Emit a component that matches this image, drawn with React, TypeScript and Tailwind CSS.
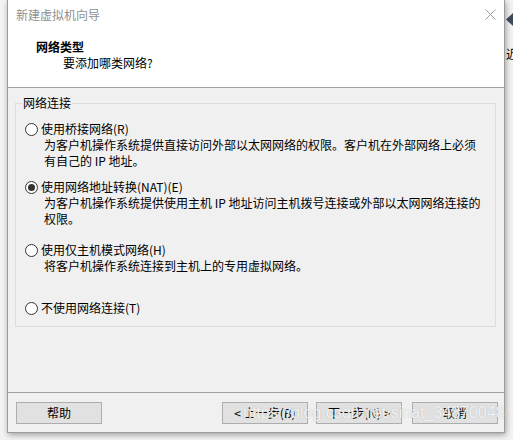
import React from "react";

function Radio({ checked }: { checked?: boolean }) {
  return (
    <span className="w-[13px] h-[13px] rounded-full border border-[#333333] bg-white flex items-center justify-center shrink-0">
      {checked ? <span className="w-[7px] h-[7px] rounded-full bg-[#333333]" /> : null}
    </span>
  );
}

function Option({
  label,
  desc,
  checked,
  className,
}: {
  label: string;
  desc: string[];
  checked?: boolean;
  className?: string;
}) {
  return (
    <div className={"pl-[9px] " + (className ?? "")}>
      <div className="flex items-center gap-[3px] h-[16px]">
        <Radio checked={checked} />
        <span className="leading-[16px]">{label}</span>
      </div>
      {desc.map((d, i) => (
        <div key={i} className="pl-[19px] leading-[16px] h-[16px] whitespace-nowrap">
          {d}
        </div>
      ))}
    </div>
  );
}

function Btn({ children, className }: { children: React.ReactNode; className?: string }) {
  return (
    <div
      className={
        "h-[22px] w-[86px] bg-[#e1e1e1] border border-[#adadad] flex items-center justify-center leading-[16px] " +
        (className ?? "")
      }
    >
      {children}
    </div>
  );
}

export default function App() {
  return (
    <div className="w-[513px] h-[440px] bg-[#f3f3f3] flex overflow-hidden relative text-[12px] text-black font-['Noto_Sans_CJK_SC','Noto_Sans',sans-serif]">
      <div className="w-[7px] shrink-0" />
      <div className="w-[498px] h-[433px] shrink-0 flex flex-col border-x border-b border-[#9c9c9c] bg-white shadow-[1px_2px_6px_rgba(0,0,0,0.35)] z-10">
        {/* title bar */}
        <div className="h-[30px] flex items-center justify-between pl-[8px] pr-[8px]">
          <span className="text-[#8f8f8f] leading-[16px]">新建虚拟机向导</span>
          <svg width="11" height="11" viewBox="0 0 11 11" className="mb-[1px]">
            <path d="M0.5 0.5 L10.5 10.5 M10.5 0.5 L0.5 10.5" stroke="#9a9a9a" strokeWidth="1" fill="none" />
          </svg>
        </div>
        {/* header */}
        <div className="h-[57px] pl-[28px] pt-[9px]">
          <div className="font-bold leading-[16px]">网络类型</div>
          <div className="pl-[27px] leading-[16px]">要添加哪类网络?</div>
        </div>
        {/* body */}
        <div className="h-[305px] bg-[#f0f0f0] border-t border-[#a0a0a0]">
          <fieldset className="mt-[7px] ml-[7px] w-[481px] border border-[#dcdcdc] pb-[10px]">
            <legend className="ml-[6px] px-[1px] leading-[16px]">网络连接</legend>
            <Option
              className="mt-[10px]"
              label="使用桥接网络(R)"
              desc={[
                "为客户机操作系统提供直接访问外部以太网网络的权限。客户机在外部网络上必须",
                "有自己的 IP 地址。",
              ]}
            />
            <Option
              className="mt-[10px]"
              checked
              label="使用网络地址转换(NAT)(E)"
              desc={[
                "为客户机操作系统提供使用主机 IP 地址访问主机拨号连接或外部以太网网络连接的",
                "权限。",
              ]}
            />
            <Option
              className="mt-[15px]"
              label="使用仅主机模式网络(H)"
              desc={["将客户机操作系统连接到主机上的专用虚拟网络。"]}
            />
            <Option className="mt-[26px]" label="不使用网络连接(T)" desc={[]} />
          </fieldset>
        </div>
        {/* footer */}
        <div className="flex-1 bg-[#f0f0f0] border-t border-[#a0a0a0] flex items-start pt-[9px] pl-[8px]">
          <Btn>帮助</Btn>
          <Btn className="ml-[120px]">&lt; 上一步(B)</Btn>
          <Btn className="ml-[8px]">下一步(N) &gt;</Btn>
          <Btn className="ml-[10px]">取消</Btn>
        </div>
      </div>
      <div className="flex-1 flex flex-col pt-[13px]">
        <svg width="8" height="13" viewBox="0 0 8 13">
          <path d="M1 6.5 L8 0 L8 13 Z" fill="#3d4b5c" />
        </svg>
        <span className="mt-[20px] ml-[1px] leading-[16px] whitespace-nowrap">近</span>
      </div>
      <span className="absolute left-[243px] top-[403px] z-20 text-[16px] leading-[20px] whitespace-nowrap text-white/85 font-['Liberation_Sans',sans-serif] [text-shadow:0_0_1px_rgba(140,140,140,0.7)]">
        https://blog.csdn.net/sinat_34870048
      </span>
    </div>
  );
}
